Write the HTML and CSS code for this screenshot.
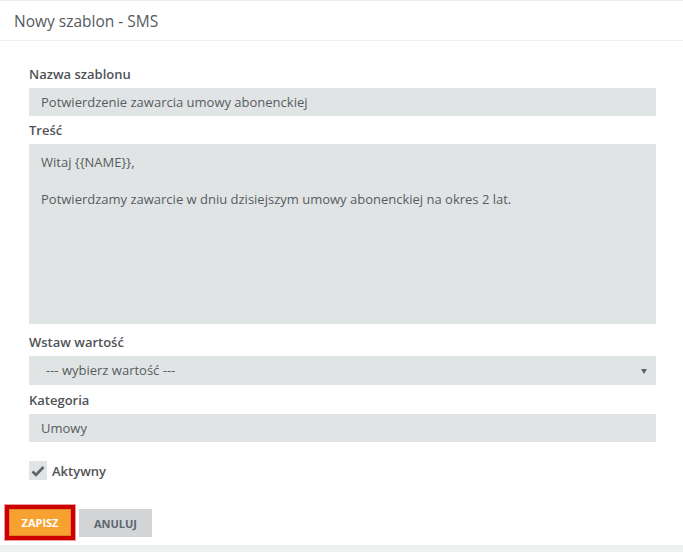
FILE: index.html
```html
<!DOCTYPE html>
<html lang="pl">
<head>
<meta charset="utf-8">
<title>Nowy szablon - SMS</title>
<link rel="stylesheet" href="styles.css">
</head>
<body>
<div class="page">
  <div class="header">
    <h1 class="title">Nowy szablon - SMS</h1>
  </div>
  <form class="form">
    <label class="label">Nazwa szablonu</label>
    <div class="field">Potwierdzenie zawarcia umowy abonenckiej</div>
    <label class="label">Treść</label>
    <div class="field textarea">Witaj {{NAME}},<br><br>Potwierdzamy zawarcie w dniu dzisiejszym umowy abonenckiej na okres 2 lat.</div>
    <label class="label">Wstaw wartość</label>
    <div class="field select"><span class="select-text">--- wybierz wartość ---</span><span class="arrow"></span></div>
    <label class="label">Kategoria</label>
    <div class="field">Umowy</div>
    <div class="check-row">
      <span class="checkbox">
        <svg width="14" height="12" viewBox="0 0 14 12"><path d="M1.5 6.5 L5 10 L12.5 2" fill="none" stroke="#58636b" stroke-width="2.6"/></svg>
      </span>
      <span class="check-label">Aktywny</span>
    </div>
  </form>
  <div class="actions">
    <button class="btn btn-primary" type="button">ZAPISZ</button>
    <button class="btn btn-default" type="button">ANULUJ</button>
  </div>
  <div class="footer-strip"></div>
</div>
</body>
</html>
```
FILE: styles.css
```css
html, body {
  margin: 0;
  padding: 0;
  background: #ffffff;
}
body {
  font-family: "Open Sans", "Liberation Sans", sans-serif;
  color: #555a5e;
  width: 683px;
  height: 552px;
  overflow: hidden;
}
.page {
  border-top: 1px solid #ececec;
  display: flex;
  flex-direction: column;
  height: 551px;
}
.header {
  height: 39px;
  border-bottom: 1px solid #f1f1f1;
  padding-left: 14px;
  display: flex;
  align-items: center;
}
.title {
  margin: 0;
  font-size: 15.5px;
  font-weight: 400;
  color: #555a5e;
  line-height: 20px;
}
.form {
  padding: 24px 27px 0 29px;
  margin: 0;
  display: flex;
  flex-direction: column;
}
.label {
  display: block;
  font-size: 13px;
  font-weight: 600;
  line-height: 18px;
  color: #4f5356;
  margin-bottom: 5px;
}
.field {
  background: #e1e4e5;
  height: 28px;
  line-height: 28px;
  padding: 0 12px;
  font-size: 13px;
  color: #575c60;
  margin-bottom: 5px;
  white-space: nowrap;
}
.textarea {
  height: 180px;
  line-height: 18.5px;
  padding-top: 9px;
  box-sizing: border-box;
  white-space: normal;
  margin-bottom: 9px;
}
.select {
  height: 29px;
  line-height: 29px;
  display: flex;
  justify-content: space-between;
  align-items: center;
  padding-left: 17px;
  padding-right: 9px;
  margin-bottom: 6px;
}
.arrow {
  width: 0;
  height: 0;
  border-left: 3px solid transparent;
  border-right: 3px solid transparent;
  border-top: 5px solid #58636b;
  margin-top: 1px;
}
.check-row {
  margin-top: 14px;
  display: flex;
  align-items: center;
  height: 19px;
}
.checkbox {
  width: 18px;
  height: 19px;
  background: #e1e4e5;
  display: flex;
  align-items: center;
  justify-content: center;
}
.check-label {
  margin-left: 5px;
  font-size: 13px;
  font-weight: 600;
  color: #4f5356;
}
.actions {
  margin-top: 29px;
  padding-left: 9px;
  display: flex;
  gap: 8px;
  align-items: flex-start;
}
.btn {
  font-family: "Open Sans", "Liberation Sans", sans-serif;
  font-size: 11px;
  font-weight: 700;
  border: none;
  margin: 0;
  cursor: pointer;
}
.btn-primary {
  width: 62px;
  height: 27px;
  background: #f7a230;
  border: 1px solid #e8822c;
  color: #ffffff;
  box-shadow: 0 0 0 4px #cc0000, 0 0 0 5px #ee9a9a;
}
.btn-default {
  width: 73px;
  height: 28px;
  background: #d3d4d5;
  color: #5b6670;
}
.footer-strip {
  margin-top: auto;
  height: 7px;
  background: #f0f1f1;
}
```
